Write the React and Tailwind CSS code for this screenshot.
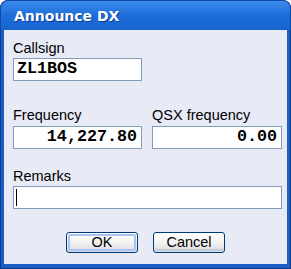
import React from "react";

const label = "block text-[14.5px] leading-[17px] h-[17px] text-black [font-family:'Liberation_Sans',Arial,sans-serif]";
const inputBox = "h-[23px] border border-[#7f9db9] bg-white flex items-center";
const mono = "font-bold text-[16.7px] leading-none text-black [font-family:'Liberation_Mono','Courier_New',monospace]";

function Button({ children, primary }) {
  return (
    <div className="w-[72px] h-[21px] rounded-[3px] border border-[#003c74] bg-gradient-to-b from-white via-[#f3f3f0] to-[#d6dbe6] p-px">
      <div
        className={
          "w-full h-full rounded-[2px] flex items-center justify-center text-[14.5px] text-black [font-family:'Liberation_Sans',Arial,sans-serif] " +
          (primary ? "shadow-[inset_0_0_0_2px_#a9c4f0]" : "shadow-[inset_0_-2px_0_#c7cdd8]")
        }
      >
        {children}
      </div>
    </div>
  );
}

export default function App() {
  return (
    <div className="w-[291px] h-[269px] bg-[#0c3a8a] rounded-t-[8px] flex flex-col overflow-hidden">
      {/* title bar */}
      <div className="h-[30px] shrink-0 rounded-t-[8px] bg-gradient-to-b from-[#3c8bec] via-[#1c6dda] to-[#1864d0] border-t border-x border-[#0d4aa8] flex items-center pl-[13px]">
        <span className="text-white font-bold text-[14px] [font-family:'DejaVu_Sans',sans-serif] [text-shadow:1px_1px_0_#0a3d8f] pt-px">
          Announce DX
        </span>
      </div>
      {/* frame */}
      <div className="flex-1 flex flex-col bg-[#1b5fc6] border-x border-b border-[#0c3a8a]">
        <div className="flex-1 mx-[3px] mb-[4px] bg-[#e8eaf6] pl-[9px] pr-[5px] flex flex-col">
          <span className={label + " mt-[10px]"}>Callsign</span>
          <div className={inputBox + " w-[129px] mt-px pl-[3px]"}>
            <span className={mono}>ZL1BOS</span>
          </div>

          <div className="flex gap-[10px] mt-[26px]">
            <div className="flex flex-col w-[129px]">
              <span className={label}>Frequency</span>
              <div className={inputBox + " mt-[2px] justify-end pr-[4px]"}>
                <span className={mono}>14,227.80</span>
              </div>
            </div>
            <div className="flex flex-col w-[130px]">
              <span className={label}>QSX frequency</span>
              <div className={inputBox + " mt-[2px] justify-end pr-[4px]"}>
                <span className={mono}>0.00</span>
              </div>
            </div>
          </div>

          <span className={label + " mt-[19px]"}>Remarks</span>
          <div className={inputBox + " w-[269px] mt-px pl-[2px]"}>
            <div className="w-px h-[17px] bg-black" />
          </div>

          <div className="flex gap-[15px] mt-[23px] pl-[53px]">
            <Button primary>OK</Button>
            <Button>Cancel</Button>
          </div>
        </div>
      </div>
    </div>
  );
}
